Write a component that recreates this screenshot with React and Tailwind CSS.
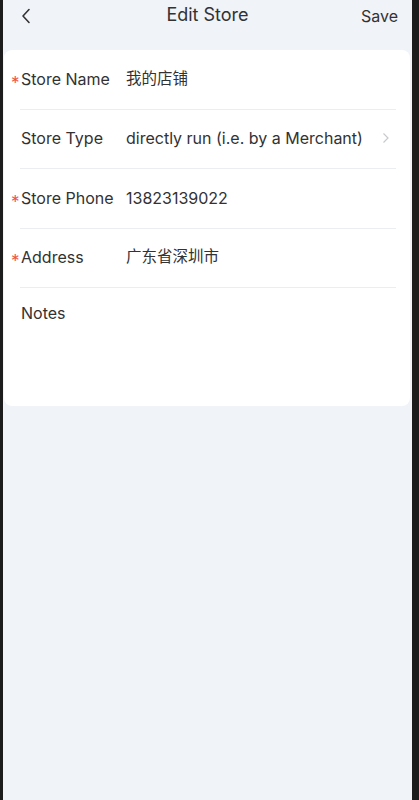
import React from "react";

const font = { fontFamily: 'Inter, "Noto Sans CJK SC", sans-serif' };

function Row({ label, value, cjk, required, arrow }) {
  return (
    <div className="ml-4 mr-[14px] flex h-[59.5px] items-center border-b border-[#ebedf0] pb-px">
      <div className="relative w-[106px] shrink-0 pl-px text-[16px] leading-5 text-[#323233]">
        {required && (
          <span className="absolute left-[-9px] top-[4px] text-[17px] leading-5 text-[#f0504f]">*</span>
        )}
        {label}
      </div>
      <div className={(cjk ? "text-[15.5px]" : "text-[16px]") + " flex-1 leading-5 text-[#323233]"}>{value}</div>
      {arrow && (
        <svg width="8" height="12" viewBox="0 0 8 12" className="mr-[6px]">
          <polyline points="1.5,1.5 6,6 1.5,10.5" fill="none" stroke="#c8c9cc" strokeWidth="1.2" />
        </svg>
      )}
    </div>
  );
}

export default function App() {
  return (
    <div className="flex h-[800px] w-[419px] bg-[#1c1c1c] pl-[3px] pr-[7px]" style={font}>
      <div className="flex flex-1 flex-col bg-[#f0f3f8]">
        <div className="relative flex h-[30px] items-center justify-center">
          <svg width="12" height="16" viewBox="0 0 12 16" className="absolute left-[17px] top-[8px]">
            <polyline points="9,1.5 3,8 9,14.5" fill="none" stroke="#333" strokeWidth="1.6" strokeLinejoin="round" strokeLinecap="round" />
          </svg>
          <span className="text-[18px] leading-6 text-[#323233]">Edit Store</span>
          <span className="absolute right-[14px] top-[6px] text-[16px] leading-5 text-[#323233]">Save</span>
        </div>
        <div className="ml-px mr-[2px] mt-5 h-[356px] rounded-lg bg-white">
          <Row label="Store Name" value="我的店铺" cjk required />
          <Row label="Store Type" value="directly run (i.e. by a Merchant)" arrow />
          <Row label="Store Phone" value="13823139022" required />
          <Row label="Address" value="广东省深圳市" cjk required />
          <div className="ml-4 pt-[15px] pl-px text-[16px] leading-5 text-[#323233]">Notes</div>
        </div>
      </div>
    </div>
  );
}
